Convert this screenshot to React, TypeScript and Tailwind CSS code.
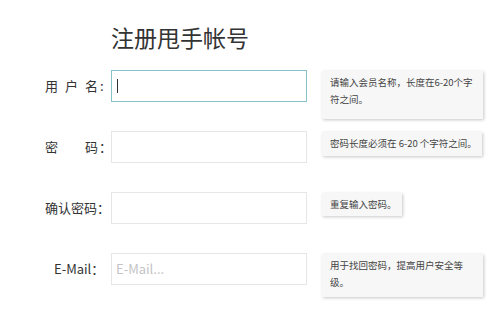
import React from "react";

const font = { fontFamily: '"Noto Sans CJK SC", "Noto Sans", sans-serif' };

function Row({
  label,
  input,
  tip,
  tipClass,
  focused,
}: {
  label: React.ReactNode;
  input: React.ReactNode;
  tip: React.ReactNode;
  tipClass: string;
  focused?: boolean;
}) {
  return (
    <div className="flex items-start h-[32px]">
      <div className="w-[106px] h-[32px] flex items-center text-[13px] text-[#333] whitespace-nowrap">
        {label}
      </div>
      <div
        className={`ml-[5px] w-[196px] h-[32px] border flex items-center pl-[4px] ${
          focused ? "border-[#86c3c8]" : "border-[#e6e6e6]"
        }`}
      >
        {input}
      </div>
      <div
        className={`ml-[15px] mt-[1px] shrink-0 bg-[#f7f7f7] shadow-[1px_1px_3px_rgba(0,0,0,0.22)] px-[8px] pt-[3px] text-[9.5px] leading-[17px] text-[#444] whitespace-nowrap ${tipClass}`}
      >
        {tip}
      </div>
    </div>
  );
}

export default function App() {
  return (
    <div className="w-[500px] h-[309px] bg-white overflow-hidden relative" style={font}>
      <div className="pt-[23px]">
        <div className="pl-[111px] text-[23px] leading-[28px] h-[28px] text-[#333]">注册甩手帐号</div>
      </div>
      <div className="mt-[19px] flex flex-col gap-[29px]">
        <Row
          label={
            <span className="pl-[45px] flex gap-[7px]">
              <span>用</span>
              <span>户</span>
              <span>名</span>
              <span className="-ml-[5px]">:</span>
            </span>
          }
          focused
          input={<span className="w-[1px] h-[14px] bg-[#333] ml-[1px]" />}
          tip={
            <>
              请输入会员名称，长度在6-20个字
              <br />
              符之间。
            </>
          }
          tipClass="w-[161px] h-[48px]"
        />
        <Row
          label={
            <span className="pl-[45px] flex">
              <span>密</span>
              <span className="ml-[27px]">码</span>
              <span className="ml-[1px]">：</span>
            </span>
          }
          input={null}
          tip={<>密码长度必须在 6-20 个字符之间。</>}
          tipClass="w-[160px] h-[24px]"
        />
        <Row
          label={<span className="pl-[45px]">确认密码：</span>}
          input={null}
          tip={<>重复输入密码。</>}
          tipClass="w-[80px] h-[23px]"
        />
        <Row
          label={<span className="pl-[54px]">E-Mail：</span>}
          input={<span className="text-[13px] text-[#c4c4c4]">E-Mail...</span>}
          tip={
            <>
              用于找回密码，提高用户安全等
              <br />
              级。
            </>
          }
          tipClass="w-[161px] h-[43px]"
        />
      </div>
    </div>
  );
}
